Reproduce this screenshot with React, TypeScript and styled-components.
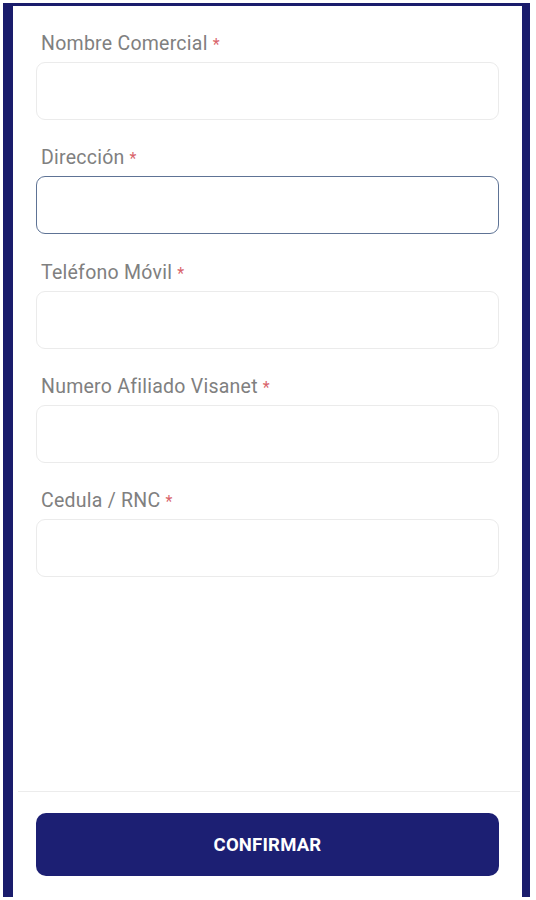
import React from 'react';
import styled, { createGlobalStyle } from 'styled-components';

const GlobalStyle = createGlobalStyle`
  html, body {
    margin: 0;
    padding: 0;
    background: #ffffff;
    font-family: Roboto, 'Liberation Sans', sans-serif;
  }
`;

const Frame = styled.div`
  box-sizing: border-box;
  margin: 3px 6px 0 3px;
  height: 894px;
  border-left: 10px solid #1a1c6c;
  border-top: 3px solid #1a1c6c;
  border-right: 8px solid #1a1c6c;
  background: #ffffff;
  display: flex;
  flex-direction: column;
`;

const Form = styled.div`
  flex: 1;
  padding: 27px 23px 0;
  display: flex;
  flex-direction: column;
`;

const Field = styled.div`
  display: flex;
  flex-direction: column;
  margin-bottom: 27.25px;
`;

const Label = styled.label`
  font-size: 19.5px;
  line-height: 22px;
  letter-spacing: 0.25px;
  color: #808080;
  padding-left: 5px;
  margin-bottom: 7px;
`;

const Star = styled.span`
  color: #d9646b;
  font-size: 16px;
  line-height: 0;
  margin-left: 5px;
`;

interface InputProps {
  $focused?: boolean;
}

const Input = styled.div<InputProps>`
  box-sizing: border-box;
  height: 58px;
  border-radius: 9px;
  border: ${(p: InputProps) => (p.$focused ? '1.5px solid #5e7395' : '1px solid #ebebeb')};
  background: #ffffff;
`;

const Footer = styled.div`
  margin: 0 2px 0 5px;
  border-top: 1px solid #ececec;
  padding: 21px 21px 21px 18px;
`;

const Button = styled.button`
  box-sizing: border-box;
  width: 100%;
  height: 63px;
  border: none;
  border-radius: 10px;
  background: #1c1f73;
  color: #ffffff;
  font-family: Roboto, 'Liberation Sans', sans-serif;
  font-weight: 700;
  font-size: 18.5px;
  letter-spacing: 0.2px;
  cursor: pointer;
`;

const fields = [
  { label: 'Nombre Comercial' },
  { label: 'Dirección', focused: true },
  { label: 'Teléfono Móvil' },
  { label: 'Numero Afiliado Visanet' },
  { label: 'Cedula / RNC' },
];

const App: React.FC = () => {
  return (
    <>
      <GlobalStyle />
      <Frame>
        <Form>
          {fields.map((f) => (
            <Field key={f.label}>
              <Label>
                {f.label}
                <Star>*</Star>
              </Label>
              <Input $focused={f.focused} />
            </Field>
          ))}
        </Form>
        <Footer>
          <Button>CONFIRMAR</Button>
        </Footer>
      </Frame>
    </>
  );
};

export default App;
